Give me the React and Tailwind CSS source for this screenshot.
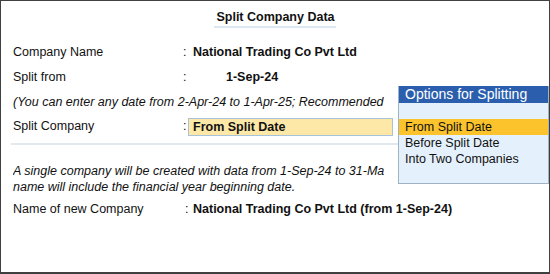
const options = ['From Split Date', 'Before Split Date', 'Into Two Companies'];

function Row({ label, children, labelWidth = 'w-[170px]' }) {
  return (
    <div className="flex items-center h-[25px] whitespace-nowrap">
      <span className={`${labelWidth} shrink-0`}>{label}</span>
      <span className="w-[7px] shrink-0">:</span>
      {children}
    </div>
  );
}

function OptionsList() {
  return (
    <div className="absolute left-[397px] top-[85px] w-[151px] h-[98px] bg-[#e4f0fb] border border-[#9fb2c6] border-t-0">
      <div className="h-[17px] bg-[#2b5fae] text-white text-[14px] leading-[17px] pl-[6px]">
        Options for Splitting
      </div>
      <div className="h-[16px]" />
      {options.map((opt, i) => (
        <div
          key={opt}
          className={`h-[16px] leading-[16px] pl-[6px] ${i === 0 ? 'bg-[#fcc32c]' : ''}`}
        >
          {opt}
        </div>
      ))}
    </div>
  );
}

export default function App() {
  return (
    <div
      className="relative w-[550px] h-[274px] overflow-hidden bg-white border border-b-2 border-[#404040] text-[12.5px] text-[#111]"
      style={{ fontFamily: '"Liberation Sans", Arial, sans-serif' }}
    >
      {/* Title */}
      <div className="flex justify-center pt-[9px]">
        <span className="font-bold leading-[15px] pb-[1px] border-b-2 border-[#dce7f1] pl-[2px] pr-[1px]">
          Split Company Data
        </span>
      </div>

      {/* Top fields */}
      <div className="pl-[12px] pt-[12px]">
        <Row label="Company Name">
          <span className="ml-[3px] font-bold">National Trading Co Pvt Ltd</span>
        </Row>
        <Row label="Split from">
          <span className="ml-[36px] font-bold">1-Sep-24</span>
        </Row>
        {/* rest of the hint is hidden under the options list */}
        <div className="w-[384px] overflow-hidden h-[24px] leading-[24px] italic whitespace-nowrap">
          (You can enter any date from 2-Apr-24 to 1-Apr-25; Recommended
        </div>
        <Row label="Split Company">
          <div className="ml-[-2px] w-[205px] h-[18px] border border-[#a8c3d9] bg-[#fde8a8] pl-[4px] leading-[16px] font-bold">
            From Split Date
          </div>
        </Row>
      </div>

      {/* Separator */}
      <div className="ml-[10px] mt-[4px] h-[2px] bg-[#e1e8f0]" />

      {/* New company info */}
      <div className="pl-[12px] pt-[18px]">
        <div className="w-[384px] overflow-hidden italic leading-[16px] whitespace-nowrap">
          <div>A single company will be created with data from 1-Sep-24 to 31-Ma</div>
          <div>name will include the financial year beginning date.</div>
        </div>
        <div className="mt-[2px]">
          <Row label="Name of new Company" labelWidth="w-[172px]">
            <span className="ml-[1px] font-bold">National Trading Co Pvt Ltd (from 1-Sep-24)</span>
          </Row>
        </div>
      </div>

      <OptionsList />
    </div>
  );
}
